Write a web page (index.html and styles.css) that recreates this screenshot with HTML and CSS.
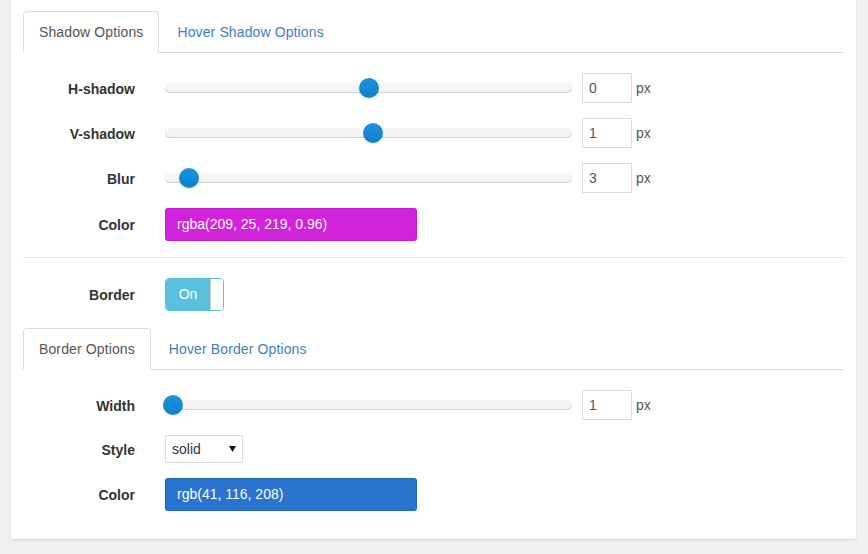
FILE: index.html
```html
<!DOCTYPE html>
<html>
<head>
<meta charset="utf-8">
<link rel="stylesheet" href="styles.css">
</head>
<body>
<div class="panel">
  <ul class="tabs">
    <li class="tab active">Shadow Options</li>
    <li class="tab">Hover Shadow Options</li>
  </ul>
  <div class="tab-body">
    <div class="row">
      <label class="lbl">H-shadow</label>
      <div class="ctrl">
        <div class="track"><span class="handle" style="left:50%"></span></div>
        <input class="num" type="text" value="0"><span class="unit">px</span>
      </div>
    </div>
    <div class="row">
      <label class="lbl">V-shadow</label>
      <div class="ctrl">
        <div class="track"><span class="handle" style="left:51%"></span></div>
        <input class="num" type="text" value="1"><span class="unit">px</span>
      </div>
    </div>
    <div class="row">
      <label class="lbl">Blur</label>
      <div class="ctrl">
        <div class="track"><span class="handle" style="left:6%"></span></div>
        <input class="num" type="text" value="3"><span class="unit">px</span>
      </div>
    </div>
    <div class="row row-tall">
      <label class="lbl">Color</label>
      <div class="ctrl">
        <div class="swatch swatch-magenta">rgba(209, 25, 219, 0.96)</div>
      </div>
    </div>
  </div>

  <div class="divider"></div>

  <div class="row row-tall">
    <label class="lbl">Border</label>
    <div class="ctrl">
      <div class="toggle"><span class="toggle-on">On</span><span class="toggle-knob"></span></div>
    </div>
  </div>

  <ul class="tabs tabs-second">
    <li class="tab active">Border Options</li>
    <li class="tab">Hover Border Options</li>
  </ul>
  <div class="tab-body">
    <div class="row">
      <label class="lbl">Width</label>
      <div class="ctrl">
        <div class="track"><span class="handle" style="left:2%"></span></div>
        <input class="num" type="text" value="1"><span class="unit">px</span>
      </div>
    </div>
    <div class="row row-select">
      <label class="lbl">Style</label>
      <div class="ctrl">
        <div class="select"><span>solid</span>
          <svg class="caret" width="7" height="6" viewBox="0 0 7 6"><path d="M0 0H7L3.5 6Z" fill="#111"/></svg>
        </div>
      </div>
    </div>
    <div class="row row-tall">
      <label class="lbl">Color</label>
      <div class="ctrl">
        <div class="swatch swatch-blue">rgb(41, 116, 208)</div>
      </div>
    </div>
  </div>
</div>
</body>
</html>
```

FILE: styles.css
```css
* { box-sizing: border-box; }
html, body { margin: 0; padding: 0; }
body {
  background: #f0f0f0;
  font-family: "Liberation Sans", Arial, sans-serif;
  font-size: 14px;
  color: #333;
  width: 868px;
  height: 554px;
  overflow: hidden;
}
.panel {
  margin-left: 11px;
  width: 845px;
  background: #fff;
  padding: 11px 12px 28px 12px;
  box-shadow: 0 1px 2px rgba(0,0,0,0.12);
}
.tabs {
  list-style: none;
  margin: 0;
  padding: 0;
  display: flex;
  border-bottom: 1px solid #ddd;
  height: 42px;
}
.tab {
  height: 42px;
  padding: 10px 15px;
  line-height: 20px;
  border: 1px solid transparent;
  border-radius: 4px 4px 0 0;
  margin-right: 2px;
  color: #3c7fc4;
  letter-spacing: 0.12px;
}
.tab.active {
  color: #555;
  border-color: #ddd;
  border-bottom-color: #fff;
  background: #fff;
}
.tabs-second { margin-top: 17px; }
.tab-body { padding-top: 20px; }
.row {
  display: flex;
  align-items: center;
  height: 30px;
  margin-bottom: 15px;
}
.row-tall { height: 33px; margin-bottom: 0; }
.row-select { height: 28px; }
.lbl {
  width: 112px;
  text-align: right;
  font-weight: bold;
  color: #333;
  flex: none;
  padding-top: 2px;
}
.row-tall .lbl { padding-top: 0; }
.ctrl {
  margin-left: 30px;
  display: flex;
  align-items: center;
  height: 100%;
}
.track {
  position: relative;
  width: 407px;
  height: 10px;
  border-radius: 5px;
  background: #f5f5f5;
  box-shadow: inset 0 -1px 1px #cfcfcf;
}
.handle {
  position: absolute;
  top: 50%;
  width: 20px;
  height: 20px;
  margin: -10px 0 0 -10px;
  border-radius: 50%;
  background: linear-gradient(#1d93dc, #0b82cc);
  box-shadow: 0 1px 1px rgba(0,0,0,0.12);
}
.num {
  margin-left: 10px;
  width: 50px;
  height: 30px;
  border: 1px solid #ddd;
  padding: 0 6px;
  font-family: "Liberation Sans", Arial, sans-serif;
  font-size: 14px;
  color: #555;
  outline: none;
}
.unit {
  margin-left: 4px;
  color: #555;
}
.swatch {
  width: 252px;
  height: 33px;
  border-radius: 3px;
  border: 1px solid rgba(0,0,0,0.1);
  padding-left: 11px;
  line-height: 31px;
  color: #fff;
}
.swatch-magenta { background: rgba(209, 25, 219, 0.96); }
.swatch-blue { background: rgb(41, 116, 208); }
.divider {
  border-top: 1px solid #e5e5e5;
  margin: 16px 0 20px 0;
}
.toggle {
  display: flex;
  width: 59px;
  height: 33px;
  border: 1px solid #5bc0de;
  border-radius: 4px;
  overflow: hidden;
}
.toggle-on {
  flex: 1;
  background: #5bc0de;
  color: #fff;
  text-align: center;
  line-height: 31px;
}
.toggle-knob {
  width: 13px;
  background: #fff;
  border-left: 1px solid #ccc;
}
.select {
  display: flex;
  align-items: center;
  justify-content: space-between;
  width: 78px;
  height: 28px;
  border: 1px solid #ddd;
  padding: 0 6px 0 6px;
  color: #333;
}
.caret { display: block; }
```
